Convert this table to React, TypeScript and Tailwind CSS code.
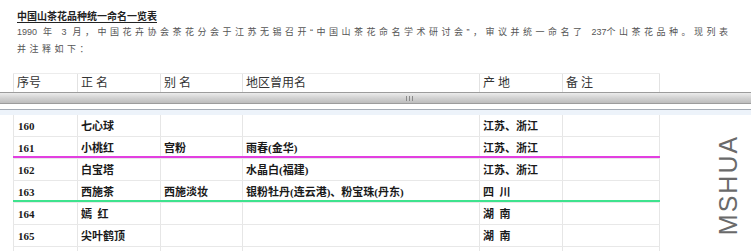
import React from "react";

type Row = {
  no: string;
  name: string;
  alias: string;
  region: string;
  origin: string;
  note: string;
};

const rows: Row[] = [
  { no: "160", name: "七心球", alias: "", region: "", origin: "江苏、浙江", note: "" },
  { no: "161", name: "小桃红", alias: "宫粉", region: "雨春(金华)", origin: "江苏、浙江", note: "" },
  { no: "162", name: "白宝塔", alias: "", region: "水晶白(福建)", origin: "江苏、浙江", note: "" },
  { no: "163", name: "西施茶", alias: "西施淡妆", region: "银粉牡丹(连云港)、粉宝珠(丹东)", origin: "四\u2002川", note: "" },
  { no: "164", name: "嫣\u2002红", alias: "", region: "", origin: "湖\u2002南", note: "" },
  { no: "165", name: "尖叶鹤顶", alias: "", region: "", origin: "湖\u2002南", note: "" },
  { no: "", name: "", alias: "", region: "", origin: "", note: "" },
];

const widths = ["w-[64px]", "w-[83px]", "w-[82px]", "w-[237px]", "w-[83px]", "w-[98px]"];

const cjk = { fontFamily: '"Liberation Serif", "Noto Sans CJK SC", serif' };
const sans = { fontFamily: '"Liberation Sans", "Noto Sans CJK SC", sans-serif' };

function Num({ children }: { children: React.ReactNode }) {
  return <span className="tracking-normal">{children}</span>;
}

export default function App() {
  const headers = ["序号", "正 名", "别 名", "地区曾用名", "产 地", "备 注"];
  return (
    <div className="relative w-[751px] h-[251px] overflow-hidden bg-white" style={sans}>
      {/* intro text */}
      <div className="h-[73px] pl-[17px] pt-[10px]">
        <div className="text-[10px] leading-[14px] font-bold underline text-[#222] underline-offset-2">
          中国山茶花品种统一命名一览表
        </div>
        <div className="text-[9px] leading-[17px] tracking-[3.5px] text-[#555] whitespace-nowrap">
          <Num>1990</Num> 年 <Num>3</Num> 月，中国花卉协会茶花分会于江苏无锡召开“中国山茶花命名学术研讨会”，审议并统一命名了 <Num>237</Num>个山茶花品种。现列表
        </div>
        <div className="text-[9px] leading-[17px] tracking-[3.5px] text-[#555] whitespace-nowrap">
          并注释如下：
        </div>
      </div>

      {/* column headers */}
      <div className="flex h-[19px] ml-[13px] w-[647px] border-t border-[#ececec]">
        {headers.map((h, i) => (
          <div
            key={i}
            className={`${widths[i]} border-l border-[#e2e2e2] ${i === 5 ? "border-r" : ""} pl-[3px] text-[12px] leading-[19px] text-[#333] whitespace-nowrap`}
            style={cjk}
          >
            {h}
          </div>
        ))}
      </div>

      {/* splitter */}
      <div className="relative h-[12px] border-y border-[#9c9c9c] bg-gradient-to-b from-[#ececec] via-[#d2d2d2] to-[#bdbdbd]">
        <div className="absolute left-[406px] top-[3px] flex gap-[2px]">
          <span className="block w-px h-[5px] bg-[#8a8a8a]" />
          <span className="block w-px h-[5px] bg-[#8a8a8a]" />
          <span className="block w-px h-[5px] bg-[#8a8a8a]" />
        </div>
      </div>
      <div className="h-[5px] bg-white" />
      <div className="h-px bg-[#a4abb4]" />
      <div className="h-[5px] bg-[#edf3fa]" />

      {/* data rows */}
      <div className="ml-[13px] w-[647px]">
        {rows.map((r, ri) => {
          const cells = [r.no, r.name, r.alias, r.region, r.origin, r.note];
          return (
            <div key={ri} className="flex h-[22px] border-b border-[#e8e8e8]">
              {cells.map((c, i) => (
                <div
                  key={i}
                  className={`${widths[i]} border-l border-[#e6e6e6] ${i === 5 ? "border-r" : ""} ${i === 0 ? "pl-[4px]" : "pl-[3px]"} text-[11px] leading-[23px] font-bold text-[#1a1a1a] whitespace-nowrap`}
                  style={cjk}
                >
                  {c}
                </div>
              ))}
            </div>
          );
        })}
      </div>

      {/* highlight strokes drawn across rows */}
      <div className="absolute left-[13px] top-[156px] w-[647px] h-[2px] bg-[#e23fe0]" />
      <div className="absolute left-[13px] top-[200px] w-[647px] h-[2px] bg-[#3ee38e]" />

      {/* vertical watermark */}
      <div
        className="absolute left-[728px] top-[185px] -translate-x-1/2 -translate-y-1/2 -rotate-90 text-[25px] leading-none tracking-[2px] text-[#6a6a6a] whitespace-nowrap"
        style={sans}
      >
        MSHUA
      </div>
    </div>
  );
}
